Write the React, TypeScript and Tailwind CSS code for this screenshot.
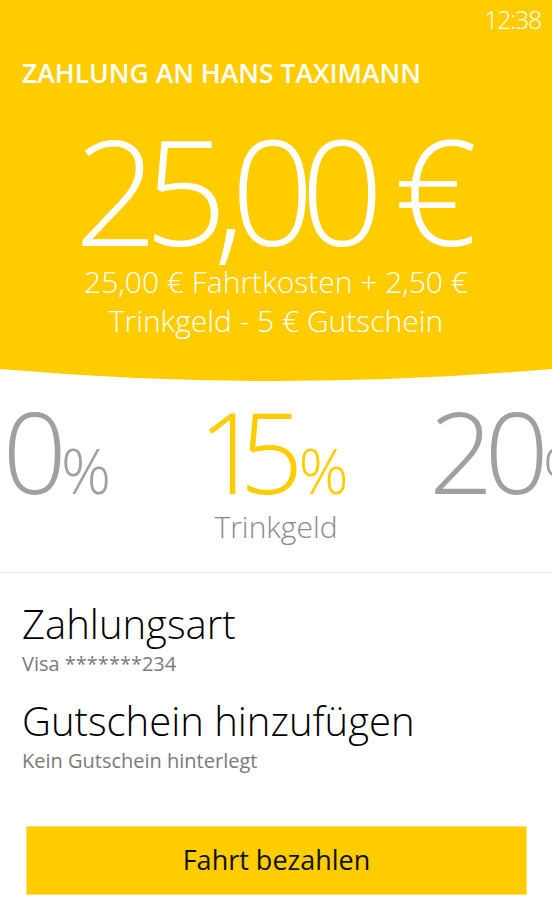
import React from "react";

const font = { fontFamily: '"Open Sans", "Noto Sans", sans-serif' };

export default function App() {
  return (
    <div
      className="w-[552px] h-[919px] bg-white overflow-hidden flex flex-col"
      style={font}
    >
      <div className="bg-[#ffcc00] text-white flex flex-col">
        <div className="flex justify-end pr-[11px] pt-[5px] h-[34px] text-[25px] font-light leading-[28px] tracking-[-0.05em]">
          12:38
        </div>
        <div className="pl-[22px] pt-[22px] pb-[2px] text-[26.5px] font-semibold leading-[34px]">
          ZAHLUNG AN HANS TAXIMANN
        </div>
        <div className="text-center text-[146px] font-light leading-[146px] tracking-[-0.095em] mt-[25px] pr-[14px]">
          25,00 €
        </div>
        <div className="text-center text-[30px] font-light leading-[39px] mt-[-1px] pb-[29px]">
          25,00 € Fahrtkosten + 2,50 €
          <br />
          Trinkgeld - 5 € Gutschein
        </div>
      </div>
      <svg width="552" height="12" viewBox="0 0 552 12" className="block">
        <path d="M0 0 H552 Q276 24 0 0 Z" fill="#ffcc00" />
      </svg>
      <div className="flex items-baseline overflow-hidden mt-[13px] font-light leading-none">
        <div className="ml-[-53px] w-[251px] shrink-0 flex items-baseline text-[#a0a0a0]">
          <span className="text-[113px] tracking-[-0.08em]">10</span>
          <span className="text-[62px] ml-[3px]">%</span>
        </div>
        <div className="w-[231px] shrink-0 flex items-baseline text-[#ffcc00]">
          <span className="text-[112px] tracking-[-0.08em]">
            <span className="tracking-[-0.2em]">1</span>5
          </span>
          <span className="text-[62px] ml-[4px]">%</span>
        </div>
        <div className="shrink-0 flex items-baseline text-[#a0a0a0]">
          <span className="text-[113px] tracking-[-0.08em]">20</span>
          <span className="text-[62px] ml-[3px]">%</span>
        </div>
      </div>
      <div className="text-center text-[30px] font-light text-[#8a8a8a] leading-[40px]">
        Trinkgeld
      </div>
      <div className="border-t border-[#e6e6e6] mt-[25px]" />
      <div className="px-[22px] pt-[28px] text-black">
        <div className="text-[40px] font-light leading-[46px]">Zahlungsart</div>
        <div className="text-[20px] text-[#7a7a7a] leading-[26px] mt-[4px]">
          Visa *******234
        </div>
        <div className="text-[40px] font-light leading-[46px] mt-[21px]">
          Gutschein hinzufügen
        </div>
        <div className="text-[20px] text-[#7a7a7a] leading-[26px] mt-[4px]">
          Kein Gutschein hinterlegt
        </div>
      </div>
      <div className="px-[26px] mt-[52px]">
        <div className="w-[501px] h-[69px] bg-[#ffcc00] border border-[#ffe066] flex items-center justify-center text-[27px] text-[#111111]">
          Fahrt bezahlen
        </div>
      </div>
    </div>
  );
}
